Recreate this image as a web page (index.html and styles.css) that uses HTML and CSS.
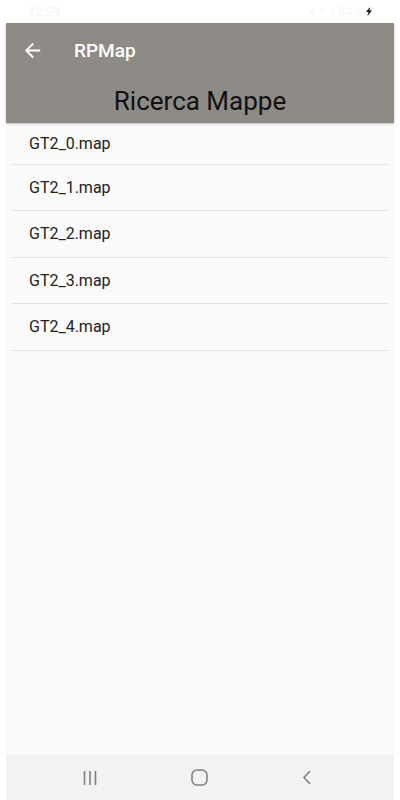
FILE: index.html
```html
<!DOCTYPE html>
<html lang="it">
<head>
<meta charset="utf-8">
<link rel="stylesheet" href="styles.css">
</head>
<body>
<div class="screen">
  <div class="status">
    <span class="time">12:29</span>
    <span class="sys">
      <span class="sysicons">✕ ⁴ᴳ .ıl</span>
      <span class="batt">84%</span>
      <svg class="bolt" width="6" height="9" viewBox="0 0 6 9"><path d="M4 0L0 5h2.5L1.5 9 6 3.5H3.5z" fill="#111"/></svg>
    </span>
  </div>
  <div class="app">
    <header class="toolbar">
      <div class="toprow">
        <svg class="back" width="23" height="23" viewBox="0 0 24 24"><path d="M20 11H7.830l5.59-5.59L12 4l-8 8 8 8 1.41-1.41L7.83 13H20v-2z" fill="#fff"/></svg>
        <span class="apptitle">RPMap</span>
      </div>
      <div class="pagetitle">Ricerca Mappe</div>
    </header>
    <main class="list">
      <div class="item first">GT2_0.map</div>
      <div class="item">GT2_1.map</div>
      <div class="item">GT2_2.map</div>
      <div class="item">GT2_3.map</div>
      <div class="item">GT2_4.map</div>
    </main>
    <nav class="navbar">
      <svg width="14" height="14" viewBox="0 0 14 14"><path d="M1.5 0v14M7 0v14M12.5 0v14" stroke="#808080" stroke-width="1.6"/></svg>
      <svg width="17" height="17" viewBox="0 0 17 17"><rect x="1" y="1" width="15" height="15" rx="5" fill="none" stroke="#808080" stroke-width="1.6"/></svg>
      <svg width="10" height="15" viewBox="0 0 10 15"><path d="M8 1L2 7.5 8 14" fill="none" stroke="#808080" stroke-width="1.6"/></svg>
    </nav>
  </div>
</div>
</body>
</html>
```
FILE: styles.css
```css
html, body {
  margin: 0;
  padding: 0;
  background: #ffffff;
}
.screen {
  width: 400px;
  height: 800px;
  display: flex;
  flex-direction: column;
  font-family: Roboto, "Noto Sans", sans-serif;
}
.status {
  height: 23px;
  display: flex;
  align-items: center;
  justify-content: space-between;
  padding: 0 28px 0 28px;
  color: #f4f4f4;
  font-size: 13px;
}
.sys {
  display: flex;
  align-items: center;
  gap: 3px;
}
.sysicons {
  font-size: 9px;
}
.batt {
  font-size: 13px;
}
.bolt {
  margin-left: 1px;
}
.app {
  flex: 1;
  margin: 0 6px;
  display: flex;
  flex-direction: column;
  min-height: 0;
}
.toolbar {
  height: 100px;
  background: #8e8a86;
  display: flex;
  flex-direction: column;
  box-shadow: 0 1px 2px rgba(0,0,0,0.25);
  position: relative;
  z-index: 1;
}
.toprow {
  height: 54px;
  display: flex;
  align-items: center;
  padding-left: 15px;
}
.back {
  display: block;
}
.apptitle {
  margin-left: 30px;
  color: #ffffff;
  font-size: 19px;
  font-weight: 500;
}
.pagetitle {
  flex: 1;
  display: flex;
  align-items: center;
  justify-content: center;
  color: #111111;
  font-size: 26px;
  padding-top: 2px;
}
.list {
  flex: 1;
  background: #fafafa;
  padding: 0 7px;
}
.item {
  height: 45.5px;
  display: flex;
  align-items: center;
  padding-left: 16px;
  border-bottom: 1px solid #dedede;
  font-size: 16px;
  color: #222222;
}
.item.first {
  height: 40.5px;
}
.navbar {
  height: 45px;
  background: #f2f2f2;
  display: flex;
  align-items: center;
  gap: 94px;
  padding-left: 77px;
}
```
